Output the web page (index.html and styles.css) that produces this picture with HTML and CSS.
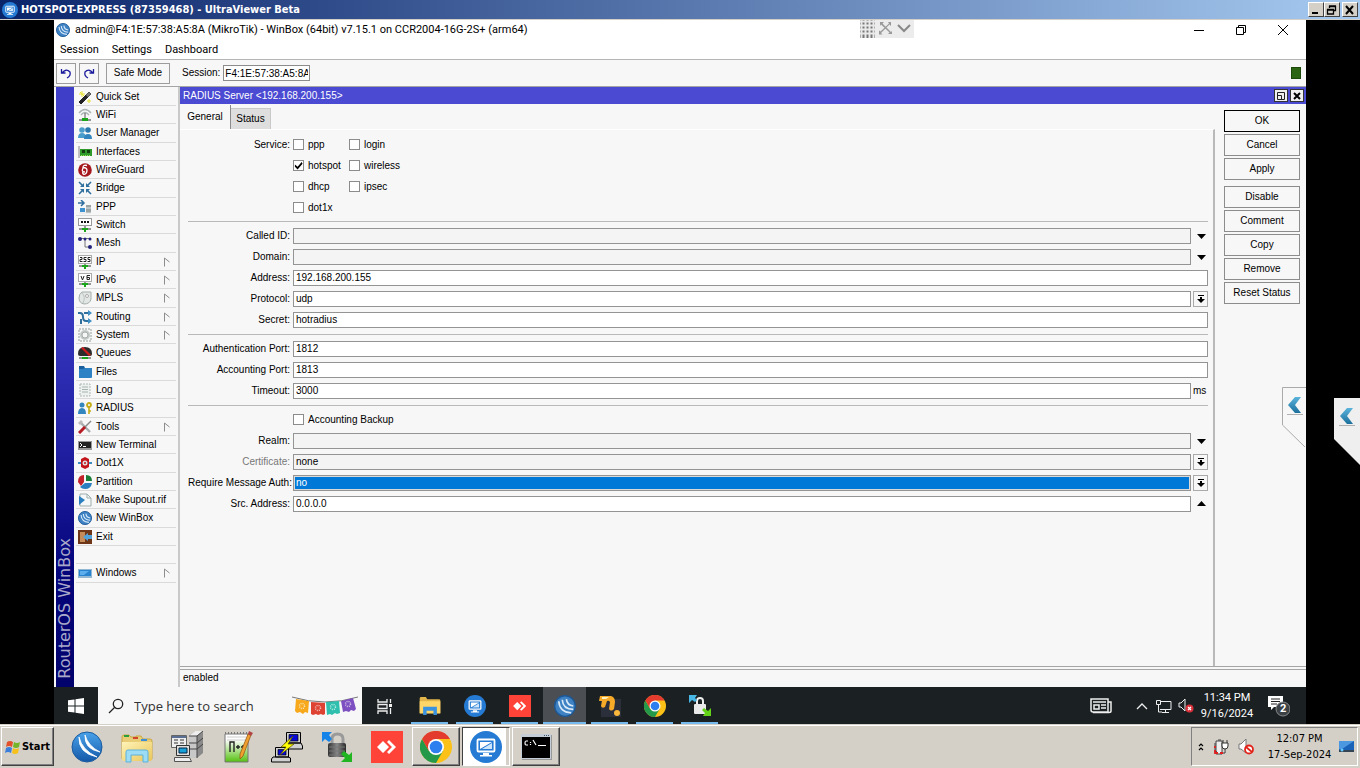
FILE: index.html
```html
<!DOCTYPE html>
<html lang="en">
<head>
<meta charset="utf-8">
<title>HOTSPOT-EXPRESS (87359468) - UltraViewer Beta</title>
<link rel="stylesheet" href="styles.css">
</head>
<body>
<svg class="defs" aria-hidden="true">
  <defs>
    <linearGradient id="blue" x1="0" y1="0" x2="0" y2="1"><stop offset="0" stop-color="#4aa3ea"/><stop offset="1" stop-color="#1458a8"/></linearGradient>
    <linearGradient id="folder" x1="0" y1="0" x2="1" y2="1"><stop offset="0" stop-color="#fff3b8"/><stop offset="1" stop-color="#e9c65a"/></linearGradient>
    <linearGradient id="chev" x1="0" y1="0" x2="0" y2="1"><stop offset="0" stop-color="#5bb4dc"/><stop offset="1" stop-color="#1b6f9c"/></linearGradient>
    <linearGradient id="green" x1="0" y1="0" x2="0" y2="1"><stop offset=".2" stop-color="#fff"/><stop offset="1" stop-color="#55c010"/></linearGradient>
    <linearGradient id="metal" x1="0" y1="0" x2="1" y2="0"><stop offset="0" stop-color="#333"/><stop offset=".5" stop-color="#888"/><stop offset="1" stop-color="#2a2a2a"/></linearGradient>
  </defs>
  <symbol id="i-winbox" viewBox="0 0 32 32"><circle cx="16" cy="16" r="15" fill="url(#blue)" stroke="#1b5b9e"/><path d="M8 6Q7 22 26 26Q11 19 8 6M14 4Q13 18 29 21Q17 15 14 4" fill="#fff" stroke="#fff" stroke-width=".8"/></symbol>
  <symbol id="i-winbox-s" viewBox="0 0 32 32"><circle cx="16" cy="16" r="15" fill="#3e82c4" stroke="#1d5896" stroke-width="2"/><path d="M7 9Q8 25 25 26M12 7Q13 21 28 21M18 6Q19 15 28 16" fill="none" stroke="#d9ebfa" stroke-width="2.400"/></symbol>
  <symbol id="i-ultra" viewBox="0 0 32 32"><circle cx="16" cy="16" r="16" fill="#257bd3"/><rect x="7.500" y="8.500" width="17" height="12" rx="1" fill="none" stroke="#fff" stroke-width="1.800"/><path d="M10 11h12l-12 7zM13 22h6v2h3v1.500H10V24h3z" fill="#fff"/><path d="M22 12v6H12z" fill="#cfe5fa"/></symbol>
  <symbol id="i-anydesk" viewBox="0 0 32 32"><path d="M0 0h32v32H0z" fill="#ff4338"/><path d="M12 10l6 6-6 6-6-6zM16 11l2-2 7 7-7 7-2-2 5-5z" fill="#fff"/></symbol>
  <symbol id="i-chrome" viewBox="0 0 32 32"><circle cx="16" cy="16" r="16" fill="#fbc116"/><path d="M2.100 8A16 16 0 0 0 16 32L22.900 20 16 16 9 20z" fill="#24994a"/><path d="M2.100 8A16 16 0 0 1 29.900 8H16L9 20z" fill="#e33b2e"/><circle cx="16" cy="16" r="8" fill="#fff"/><circle cx="16" cy="16" r="6.300" fill="#2d7ff0"/></symbol>
  <symbol id="i-folder" viewBox="0 0 32 32"><path d="M1 5q0-2 2-2h7l2 3h17q2 0 2 2v18H1z" fill="#e2b54a"/><path d="M1 9h30v18H1z" fill="#ffd667"/><path d="M6 17h20v12h-5v-6H11v6H6z" fill="#3b93e0"/></symbol>
  <symbol id="i-lock" viewBox="0 0 32 32"><path d="M11 14V8q0-5 5.500-5T22 8v6" fill="none" stroke="#9a9a9a" stroke-width="3"/><rect x="7" y="12" width="18" height="14" rx="2" fill="url(#metal)"/><path d="M8 16h16M8 20h16M8 24h16" stroke="#777"/><path d="M1 1h10L8 4l3 4-3 3-4-3-3 3z" fill="#1683e8"/><path d="M31 31H20l4-4-4-4 3-3 5 4 3-3z" fill="#20b521"/></symbol>
  <symbol id="i-lock2" viewBox="0 0 22 22"><path d="M8 9V6q0-3 3-3t3 3v3" fill="none" stroke="#eee" stroke-width="2"/><rect x="5" y="9" width="12" height="10" rx="1" fill="#e9e9e9"/><path d="M0 0h8L6 3l2 2-2 2-3-2-3 3z" fill="#49b7e6"/><path d="M22 21h-8l2-3-3-3 2-2 4 3 3-3z" fill="#63d318"/></symbol>

  <symbol id="m-quick" viewBox="0 0 14 14"><path d="M1 12L8 5l2 2-7 7z" fill="#222" stroke="#222"/><path d="M8 5l3-3 2 2-3 3z" fill="#777" stroke="#555"/><path d="M4 1v6M1 4h6M2 2l4 4M11 9v4M9 11h4" stroke="#e8e130"/></symbol>
  <symbol id="m-wifi" viewBox="0 0 14 14"><path d="M1 5q6-7 12 0M3 7q4-5 8 0" fill="none" stroke="#aab4b4" stroke-width="1.300"/><path d="M7 5v7" stroke="#555"/><path d="M1 12h12" stroke="#333"/><path d="M4 10h6v3H4z" fill="#1aa51a"/></symbol>
  <symbol id="m-users" viewBox="0 0 14 14"><circle cx="4" cy="4" r="2.800" fill="#4a9dcb"/><circle cx="10" cy="4" r="2.800" fill="#2a78ae"/><path d="M0 12q0-5 4-5t4 5z" fill="#4a9dcb"/><path d="M6 13q0-5 4-5t4 5z" fill="#3385bd"/></symbol>
  <symbol id="m-if" viewBox="0 0 14 14"><path d="M1 1v12" stroke="#888"/><path d="M2 4h12v7H2z" fill="#2f9a2a"/><path d="M4 5h3v3H4zM9 5h3v3H9z" fill="#123c12"/><path d="M3 10.500h10" stroke="#9be35f" stroke-dasharray="1 1"/></symbol>
  <symbol id="m-wg" viewBox="0 0 14 14"><circle cx="7" cy="7" r="6.800" fill="#a5171d"/><path d="M9 2.500q-4-1-4 2 4 0 4 3t-3 4q-2-1-1-3M5 5q-2 4 2 4" fill="none" stroke="#fff" stroke-width="1.300"/></symbol>
  <symbol id="m-bridge" viewBox="0 0 14 14"><path d="M1 1l4 4M13 1L9 5M1 13l4-4M13 13L9 9" stroke="#2f6f9e" stroke-width="1.600"/><path d="M6 2v4H2zM8 2v4h4zM6 12V8H2zM8 12V8h4z" fill="#2f6f9e"/></symbol>
  <symbol id="m-ppp" viewBox="0 0 14 14"><path d="M0 3h5M3 0l3 3-3 3" stroke="#2f6f9e" stroke-width="1.500" fill="none"/><path d="M2 8h5v4H2z" fill="#3d92cf"/><path d="M8 5h5v8H8z" fill="#9ba4a4"/><path d="M8 8h5M1 13h12" stroke="#e4e4e4"/></symbol>
  <symbol id="m-switch" viewBox="0 0 14 14"><rect x=".5" y=".5" width="13" height="7" fill="#fff" stroke="#999"/><path d="M3 4h8" stroke="#111" stroke-width="2" stroke-dasharray="2 1"/><path d="M7 8v4M1 11h12" stroke="#333"/><path d="M4 10h6v2H8v2H6v-2H4z" fill="#1aa51a"/></symbol>
  <symbol id="m-mesh" viewBox="0 0 14 14"><path d="M2 2.500h10M7 3v8h5" fill="none" stroke="#777"/><circle cx="2" cy="3" r="2" fill="#22227c"/><circle cx="7" cy="3" r="1.500" fill="#22227c"/><circle cx="12" cy="3" r="1.500" fill="#22227c"/><circle cx="12" cy="11" r="2" fill="#22227c"/></symbol>
  <symbol id="m-ip" viewBox="0 0 14 14"><rect x=".5" y=".5" width="13" height="8" fill="#fff" stroke="#aaa"/><path d="M2 2.500h2v2H2v2h2.500M8.500 2.500H6v2h2v2H5.500M12.500 2.500H10v2h2v2H9.500" fill="none" stroke="#222"/><path d="M1 11h12M7 9v2" stroke="#333"/><path d="M4 10h6v2H8v2H6v-2H4z" fill="#1aa51a"/></symbol>
  <symbol id="m-ip6" viewBox="0 0 14 14"><rect x=".5" y=".5" width="13" height="8" fill="#fff" stroke="#aaa"/><path d="M3 3l1.500 4L6 3M12 2.500H9v4h2.500v-2H9" fill="none" stroke="#222"/><path d="M1 11h12M7 9v2" stroke="#333"/><path d="M4 10h6v2H8v2H6v-2H4z" fill="#1aa51a"/></symbol>
  <symbol id="m-mpls" viewBox="0 0 14 14"><path d="M4 1h9v7q-1 5-7 5-5-1-5-6 0-4 3-6z" fill="#e2e6e4" stroke="#a3aeab"/><path d="M4 2q4 4 1 10" fill="none" stroke="#b9c3c0"/><circle cx="9" cy="5" r="1.500" fill="#fff" stroke="#aaa"/></symbol>
  <symbol id="m-route" viewBox="0 0 14 14"><path d="M0 3h2q3 0 3 4t3 4h3M6 3h5M3 14V9" fill="none" stroke="#2f6f9e" stroke-width="2"/><path d="M10 0l4 3-4 3zM10 8l4 3-4 3z" fill="#3f8fc5"/></symbol>
  <symbol id="m-system" viewBox="0 0 14 14"><path d="M1 1h12v12H1z" fill="none" stroke="#b5bdba" stroke-width="1.500" stroke-dasharray="2 1"/><circle cx="7" cy="7" r="5" fill="#c2cac7"/><circle cx="7" cy="7" r="3" fill="#f7f7f7" stroke="#a5aeab"/></symbol>
  <symbol id="m-queue" viewBox="0 0 14 14"><path d="M0 8q0-7 7-7t7 7q0 2-2 2H2q-2 0-2-2z" fill="#2c2c2c"/><path d="M3 2l8 8 2-1-8-8z" fill="#d01c1c"/><path d="M1 12h12" stroke="#333"/><path d="M4 11h6v2H4z" fill="#1aa51a"/></symbol>
  <symbol id="m-files" viewBox="0 0 14 14"><path d="M1 1h5l1 2h2v2H1z" fill="#185f9c"/><path d="M1 13V4h4l2-1h7v9q0 1-1 1z" fill="#2c82c4"/></symbol>
  <symbol id="m-log" viewBox="0 0 14 14"><path d="M2 1h10v12H2z" fill="#edf1f0" stroke="#adb8b5" stroke-dasharray="2 1"/><path d="M4 4h6M4 6.500h6M4 9h6" stroke="#a7b3b0"/></symbol>
  <symbol id="m-radius" viewBox="0 0 14 14"><circle cx="4" cy="4" r="2.500" fill="#3385bd"/><path d="M0 13q0-6 4-6t4 6z" fill="#3385bd"/><circle cx="11" cy="4" r="2" fill="none" stroke="#c4ac16" stroke-width="1.800"/><path d="M11 6v7M11 10h2" stroke="#c4ac16" stroke-width="1.600"/></symbol>
  <symbol id="m-tools" viewBox="0 0 14 14"><path d="M2 2l10 10" stroke="#a8adb0" stroke-width="2.400"/><path d="M0 3l3-3 2 2-3 3z" fill="#bbb"/><path d="M13 1L6 8" stroke="#888" stroke-width="1.500"/><path d="M7 7l-6 6" stroke="#b61a23" stroke-width="3"/></symbol>
  <symbol id="m-term" viewBox="0 0 14 14"><path d="M0 3h14v9H0z" fill="#999"/><path d="M1 4h12v6H1z" fill="#222"/><path d="M2 5l2 2-2 2M5 8.500h3" fill="none" stroke="#fff"/></symbol>
  <symbol id="m-dot" viewBox="0 0 14 14"><path d="M0 7h14" stroke="#3d8cc0" stroke-width="2"/><path d="M7 1l4 2v8l-4 2-4-2V3z" fill="#c3141b"/><circle cx="7" cy="7" r="2.500" fill="#ddd"/><circle cx="7" cy="7" r="1" fill="#c3141b"/></symbol>
  <symbol id="m-part" viewBox="0 0 14 14"><path d="M6 7V0Q0 0 0 7l3 4z" fill="#c3222b"/><path d="M8 0q6 0 6 6H8z" fill="#187e38"/><path d="M7 8h7q-1 6-7 6-3 0-5-2z" fill="#2a7fc0"/></symbol>
  <symbol id="m-supout" viewBox="0 0 14 14"><path d="M2 1h7l4 4v8H2z" fill="#f5f8f8" stroke="#9daead"/><path d="M9 1v4h4" fill="none" stroke="#9daead"/><path d="M1 3l6 4-6 5z" fill="#2a7fc0"/></symbol>
  <symbol id="m-exit" viewBox="0 0 14 14"><path d="M0 0h14v14H0z" fill="#6e3517"/><path d="M2 2h5v10H2z" fill="#c58b58"/><path d="M5 7l5-4v2h4v4h-4v2z" fill="#52a3da"/></symbol>
  <symbol id="m-win" viewBox="0 0 14 14"><path d="M0 3h14v9H0z" fill="#91b7d3"/><path d="M1 4h12v6H1z" fill="#2783cf"/><path d="M2 5h9l-5 4H2z" fill="#5badeb"/></symbol>
  <symbol id="flag" viewBox="0 0 8 10"><path d="M6.500 5L1.500 1v8.500" fill="none" stroke="#8d8d8d"/></symbol>
  <symbol id="down" viewBox="0 0 10 10"><path d="M1 3h9L5.500 8z"/></symbol>
  <symbol id="up" viewBox="0 0 10 10"><path d="M1 7h9L5.500 2z"/></symbol>
  <symbol id="pick" viewBox="0 0 10 10"><path d="M2 1h6v1H2zM4 3h2v2h3L5 9 1 5h3z"/></symbol>
  <symbol id="side" viewBox="0 0 18 20"><path d="M9 1h6l-6 8 6 8H9L2 9z" fill="url(#chev)"/><path d="M1 18.500h16" stroke="#b0b0b0"/></symbol>
</svg>

<header class="host-title">
  <svg class="i16"><use href="#i-ultra"/></svg>
  <h1>HOTSPOT-EXPRESS (87359468) - UltraViewer Beta</h1>
  <div class="host-ctl">
    <button aria-label="Minimize"><svg viewBox="0 0 12 10"><path d="M2 7h6v2H2z"/></svg></button>
    <button aria-label="Restore"><svg viewBox="0 0 12 10"><path d="M3.500 3V1.500h6v4H8M1.500 5h6v4h-6zM3 1h7M1 4.500h7" fill="none" stroke="#000" stroke-width="1.300"/></svg></button>
    <button class="gap" aria-label="Close"><svg viewBox="0 0 12 10"><path d="M2 1l7 8M9 1L2 9" stroke="#000" stroke-width="2"/></svg></button>
  </div>
</header>

<main class="stage">
  <div class="remote">
    <div class="wb-title">
      <svg class="i14"><use href="#i-winbox-s"/></svg>
      <span>admin@F4:1E:57:38:A5:8A (MikroTik) - WinBox (64bit) v7.15.1 on CCR2004-16G-2S+ (arm64)</span>
      <div class="wb-ctl">
        <button aria-label="Minimize window"><svg viewBox="0 0 12 12"><path d="M1 6.500h10" stroke="#000"/></svg></button>
        <button aria-label="Restore window"><svg viewBox="0 0 12 12"><path d="M1.500 3.500h7v7h-7zM3.500 3V1.500h7v7H9" fill="none" stroke="#000"/></svg></button>
        <button aria-label="Close window"><svg viewBox="0 0 12 12"><path d="M1 1l10 10M11 1L1 11" stroke="#000"/></svg></button>
      </div>
    </div>
    <nav class="wb-menu"><a href="#">Session</a><a href="#">Settings</a><a href="#">Dashboard</a></nav>
    <div class="tools">
      <button class="sq" aria-label="Undo"><svg viewBox="0 0 12 12"><path d="M1.500 2v4h4M2 6q4-5 8-1 1 4-3 6" fill="none" stroke="#1a1a9c" stroke-width="1.300"/></svg></button>
      <button class="sq" aria-label="Redo"><svg viewBox="0 0 12 12"><path d="M10.500 2v4h-4M10 6Q6 1 2 5q-1 4 3 6" fill="none" stroke="#1a1a9c" stroke-width="1.300"/></svg></button>
      <button class="safe">Safe Mode</button>
      <label for="session">Session:</label>
      <input id="session" value="F4:1E:57:38:A5:8A" readonly>
      <span class="led"></span>
    </div>
    <div class="wb-body">
      <div class="brand"><span>RouterOS WinBox</span></div>
      <nav class="side">
        <a href="#"><svg><use href="#m-quick"/></svg><span>Quick Set</span></a>
        <a href="#"><svg><use href="#m-wifi"/></svg><span>WiFi</span></a>
        <a href="#"><svg><use href="#m-users"/></svg><span>User Manager</span></a>
        <a href="#"><svg><use href="#m-if"/></svg><span>Interfaces</span></a>
        <a href="#"><svg><use href="#m-wg"/></svg><span>WireGuard</span></a>
        <a href="#"><svg><use href="#m-bridge"/></svg><span>Bridge</span></a>
        <a href="#"><svg><use href="#m-ppp"/></svg><span>PPP</span></a>
        <a href="#"><svg><use href="#m-switch"/></svg><span>Switch</span></a>
        <a href="#"><svg><use href="#m-mesh"/></svg><span>Mesh</span></a>
        <a href="#"><svg><use href="#m-ip"/></svg><span>IP</span><svg class="flag"><use href="#flag"/></svg></a>
        <a href="#"><svg><use href="#m-ip6"/></svg><span>IPv6</span><svg class="flag"><use href="#flag"/></svg></a>
        <a href="#"><svg><use href="#m-mpls"/></svg><span>MPLS</span><svg class="flag"><use href="#flag"/></svg></a>
        <a href="#"><svg><use href="#m-route"/></svg><span>Routing</span><svg class="flag"><use href="#flag"/></svg></a>
        <a href="#"><svg><use href="#m-system"/></svg><span>System</span><svg class="flag"><use href="#flag"/></svg></a>
        <a href="#"><svg><use href="#m-queue"/></svg><span>Queues</span></a>
        <a href="#"><svg><use href="#m-files"/></svg><span>Files</span></a>
        <a href="#"><svg><use href="#m-log"/></svg><span>Log</span></a>
        <a href="#"><svg><use href="#m-radius"/></svg><span>RADIUS</span></a>
        <a href="#"><svg><use href="#m-tools"/></svg><span>Tools</span><svg class="flag"><use href="#flag"/></svg></a>
        <a href="#"><svg><use href="#m-term"/></svg><span>New Terminal</span></a>
        <a href="#"><svg><use href="#m-dot"/></svg><span>Dot1X</span></a>
        <a href="#"><svg><use href="#m-part"/></svg><span>Partition</span></a>
        <a href="#"><svg><use href="#m-supout"/></svg><span>Make Supout.rif</span></a>
        <a href="#"><svg><use href="#i-winbox-s"/></svg><span>New WinBox</span></a>
        <a href="#"><svg><use href="#m-exit"/></svg><span>Exit</span></a>
        <div class="blank"></div>
        <a href="#"><svg><use href="#m-win"/></svg><span>Windows</span><svg class="flag"><use href="#flag"/></svg></a>
      </nav>
      <section class="dialog">
        <div class="dlg-title">
          <h2>RADIUS Server &lt;192.168.200.155&gt;</h2>
          <button aria-label="Restore dialog"><svg viewBox="0 0 10 10"><path d="M1.500 1.500h7v7h-7zM2 4.500h3.500V8" fill="none" stroke="#222"/></svg></button>
          <button aria-label="Close dialog"><svg viewBox="0 0 10 10"><path d="M2 2l6 6M8 2L2 8" stroke="#000" stroke-width="2"/></svg></button>
        </div>
        <div class="dlg-main">
          <div class="panel">
            <div class="tabs"><button class="tab on">General</button><button class="tab">Status</button></div>
            <form class="form">
              <div class="group">
                <div class="row"><span class="lab">Service:</span>
                  <label class="ck"><input type="checkbox">ppp</label><label class="ck"><input type="checkbox">login</label></div>
                <div class="row"><span class="lab"></span>
                  <label class="ck"><input type="checkbox" checked>hotspot</label><label class="ck"><input type="checkbox">wireless</label></div>
                <div class="row"><span class="lab"></span>
                  <label class="ck"><input type="checkbox">dhcp</label><label class="ck"><input type="checkbox">ipsec</label></div>
                <div class="row"><span class="lab"></span>
                  <label class="ck"><input type="checkbox">dot1x</label></div>
              </div>
              <div class="group">
                <div class="row"><label class="lab" for="called">Called ID:</label><input class="fld dim" id="called"><button type="button" class="bare" aria-label="Expand Called ID"><svg><use href="#down"/></svg></button></div>
                <div class="row"><label class="lab" for="domain">Domain:</label><input class="fld dim" id="domain"><button type="button" class="bare" aria-label="Expand Domain"><svg><use href="#down"/></svg></button></div>
                <div class="row"><label class="lab" for="addr">Address:</label><input class="fld" id="addr" value="192.168.200.155"></div>
                <div class="row"><label class="lab" for="proto">Protocol:</label><select class="fld" id="proto"><option>udp</option></select><button type="button" class="pick" aria-label="Choose protocol"><svg><use href="#pick"/></svg></button></div>
                <div class="row"><label class="lab" for="secret">Secret:</label><input class="fld" id="secret" value="hotradius"></div>
              </div>
              <div class="group">
                <div class="row"><label class="lab" for="auth">Authentication Port:</label><input class="fld" id="auth" value="1812"></div>
                <div class="row"><label class="lab" for="acct">Accounting Port:</label><input class="fld" id="acct" value="1813"></div>
                <div class="row"><label class="lab" for="timeout">Timeout:</label><input class="fld" id="timeout" value="3000"><span class="unit">ms</span></div>
              </div>
              <div class="group">
                <div class="row"><span class="lab"></span><label class="ck"><input type="checkbox">Accounting Backup</label></div>
                <div class="row"><label class="lab" for="realm">Realm:</label><input class="fld dim" id="realm"><button type="button" class="bare" aria-label="Expand Realm"><svg><use href="#down"/></svg></button></div>
                <div class="row"><label class="lab off" for="cert">Certificate:</label><select class="fld dim" id="cert"><option>none</option></select><button type="button" class="pick" aria-label="Choose certificate"><svg><use href="#pick"/></svg></button></div>
                <div class="row"><label class="lab" for="msg">Require Message Auth:</label><select class="fld sel" id="msg"><option>no</option></select><button type="button" class="pick" aria-label="Choose message auth"><svg><use href="#pick"/></svg></button></div>
                <div class="row"><label class="lab" for="src">Src. Address:</label><input class="fld" id="src" value="0.0.0.0"><button type="button" class="bare" aria-label="Collapse Src. Address"><svg><use href="#up"/></svg></button></div>
              </div>
            </form>
          </div>
          <div class="actions">
            <button class="ok">OK</button><button>Cancel</button><button>Apply</button>
            <button class="next">Disable</button><button>Comment</button><button>Copy</button><button>Remove</button><button>Reset Status</button>
          </div>
        </div>
        <div class="status">enabled</div>
      </section>
    </div>
    <footer class="rbar">
      <button class="rstart" aria-label="Start menu"><svg viewBox="0 0 16 16"><path d="M0 2.300l6.500-.9v6.100H0zM7.500 1.200L16 0v7.500H7.500zM0 8.500h6.500v6.100L0 13.700zM7.500 8.500H16V16l-8.500-1.200z" fill="#fff"/></svg></button>
      <div class="search">
        <svg class="glass" viewBox="0 0 16 16"><circle cx="10" cy="6" r="4.700" fill="none" stroke="#222" stroke-width="1.300"/><path d="M6.500 9.500L1 15" stroke="#222" stroke-width="1.300"/></svg>
        <input aria-label="Search" placeholder="Type here to search">
        <svg class="bunting" viewBox="0 0 66 20"><path d="M0 1q33 10 66 0" fill="none" stroke="#777"/><path d="M4 3l13 2-1 12-3-1-2 2-3-2-3 1-2-2z" fill="#f7a81b"/><path d="M19 6l14 1v11l-2 1-2-1-3 1-2-1-3 1-2-1z" fill="#dd4232"/><path d="M34 6l13-1 1 12-3 1-2-1-3 2-2-1-3 1z" fill="#2fbfae"/><path d="M49 5l12-3 3 11-2 2-3-1-2 2-3-1-3 1z" fill="#7d4fc0"/><g fill="none" stroke="#fff" stroke-opacity=".65" stroke-dasharray="1 1" stroke-width="1.500"><circle cx="10" cy="10" r="2.500"/><circle cx="26" cy="12" r="2.500"/><circle cx="41" cy="11" r="2.500"/><circle cx="56" cy="8" r="2.500"/></g></svg>
      </div>
      <div class="apps">
        <button class="app none" aria-label="Task view"><svg viewBox="0 0 22 22"><path d="M4 4v3h9V4M4 9.500h9v4H4zM4 19v-3h9v3M16.500 4v4M16.500 13v6" fill="none" stroke="#eee" stroke-width="1.300"/><path d="M15 9h3v3h-3z" fill="#eee"/></svg></button>
        <button class="app" aria-label="File Explorer"><svg><use href="#i-folder"/></svg></button>
        <button class="app" aria-label="UltraViewer"><svg><use href="#i-ultra"/></svg></button>
        <button class="app" aria-label="AnyDesk"><svg><use href="#i-anydesk"/></svg></button>
        <button class="app on" aria-label="WinBox"><svg><use href="#i-winbox-s"/></svg></button>
        <button class="app" aria-label="Sound tool"><svg viewBox="0 0 22 22"><path d="M2 4h20v18H2z" fill="#2b2f3b"/><path d="M1 1h11q4 1 4 6l-1 7q-3 3-5 0l1-7q-1-2-3-1l-2 6q-3 2-4-1l1-5H0z" fill="#f7a928"/><path d="M3 2h7L7 4H3z" fill="#fff0c0"/><circle cx="18" cy="18" r="3" fill="#f9b73c"/></svg></button>
        <button class="app" aria-label="Chrome"><svg><use href="#i-chrome"/></svg></button>
        <button class="app" aria-label="WinSCP"><svg><use href="#i-lock2"/></svg></button>
      </div>
      <div class="rtray">
        <svg class="news" viewBox="0 0 22 16"><path d="M1 1h17v13H3q-2 0-2-2zM18 4h3v9q0 1.500-2 1.500H3" fill="none" stroke="#eee" stroke-width="1.500"/><path d="M3 4h13M11 7h5M11 10h5" stroke="#eee" stroke-width="1.400"/><path d="M4 7h5v4H4z" fill="none" stroke="#eee" stroke-width="1.500"/></svg>
        <svg class="i12 chev" viewBox="0 0 12 12"><path d="M1 9l5-5 5 5" fill="none" stroke="#eee" stroke-width="1.300"/></svg>
        <svg class="i16" viewBox="0 0 16 16"><path d="M4 3.500h11v8H4M9.500 12v3M6 14.500h7M.5 2.500h4v4h-4zM2.500 7v7H6" fill="none" stroke="#eee"/></svg>
        <svg class="i16" viewBox="0 0 16 16"><path d="M1 5h2l4-4v12L3 9H1z" fill="none" stroke="#eee"/><circle cx="11.500" cy="10.500" r="4" fill="#d8303a"/><path d="M10 9l3 3M13 9l-3 3" stroke="#fff" stroke-width="1.200"/></svg>
        <div class="rclock"><span>11:34 PM</span><span>9/16/2024</span></div>
        <div class="notif"><svg viewBox="0 0 22 22"><path d="M0 1h15v11H6l-3 3v-3H0z" fill="#fff"/><path d="M3 4h9M3 6.500h9M3 9h6" stroke="#222"/><circle cx="15" cy="14" r="7" fill="#3b4145" stroke="#888"/></svg><b>2</b></div>
      </div>
    </footer>
    <div class="viewer-tools">
      <svg viewBox="0 0 54 18"><path d="M0 0h15v18H0z" fill="#777"/><path d="M1.500 0v18M5.500 0v18M9.500 0v18M13.500 0v18M0 1.500h15M0 5.500h15M0 9.500h15M0 13.500h15" stroke="#e9e9e9" stroke-width="2"/><path d="M20 2h4l-1.500 1.500L31 12l1-1v3h-4l1.500-1.500L21 4.500 20 6zM31 2v4l-1.500-1.500L21 13l1.500 1.500H19v-4l1.500 1L29 3.500 28 2z" fill="#999"/><path d="M38 5l6 6 6-6" fill="none" stroke="#888" stroke-width="2"/></svg>
    </div>
    <button class="pull inner" aria-label="Open remote panel"><svg class="cut" viewBox="0 0 24 60"><path d="M24 .5H.500V38L24 61" fill="#f7f7f7" stroke="#aaa"/></svg><svg class="arrow"><use href="#side"/></svg></button>
  </div>
  <button class="pull outer" aria-label="Open panel"><svg class="cut" viewBox="0 0 26 67"><path d="M26 0H0v41l26 26z" fill="#efefef"/></svg><svg class="arrow"><use href="#side"/></svg></button>
</main>

<footer class="hbar">
  <button class="hstart"><svg viewBox="0 0 16 16"><path d="M2 3q3-2 6 0L7 8Q4 6 1 8z" fill="#e2512b"/><path d="M9 3q3 2 6 0l-1 5q-3 2-6 0z" fill="#74b52a"/><path d="M1 9q3-2 6 0l-1 5q-3-2-6 0z" fill="#3b7edb"/><path d="M8 9q3 2 6 0l-1 5q-3 2-6 0z" fill="#f6c11c"/></svg>Start</button>
  <div class="quick">
    <button aria-label="WinBox"><svg><use href="#i-winbox"/></svg></button>
    <button aria-label="Explorer"><svg viewBox="0 0 32 32"><path d="M1 6q0-2 2-2h5l2 2h5V5h5l2 3h7q2 0 2 2v18H1z" fill="#e8cd76" stroke="#c9a840"/><path d="M3 5h5" stroke="#2c9e3b" stroke-width="2"/><path d="M12 7h5" stroke="#d2452d" stroke-width="2"/><path d="M20 9h6" stroke="#3a8fd8" stroke-width="2"/><path d="M1 11h30v17q0 2-2 2H3q-2 0-2-2z" fill="url(#folder)"/><path d="M5 31V21q0-2 2-2h18q2 0 2 2v10h-5v-7H10v7z" fill="#9cdcf5" stroke="#5fb1d8"/></svg></button>
    <button aria-label="Servers"><svg viewBox="0 0 32 32"><path d="M18 5l6-5h8v22l-6 5h-8z" fill="#8a8a8a"/><path d="M18 5h8v22h-8z" fill="#c8c8c8"/><path d="M18 5l6-5h8l-6 5z" fill="#eee"/><path d="M18 12h8l6-5M18 18h8l6-5M18 5h8v22M26 5l6-5" fill="none" stroke="#444"/><path d="M.5 4.500h15v12H.500z" fill="#eee" stroke="#666"/><path d="M1 5h14v2H1z" fill="#5b6f95"/><path d="M3 9h4M3 12h4M9 9h4M9 12h4" stroke="#333"/><path d="M5.500 14.500h13v10h-13z" fill="#ddd" stroke="#333"/><path d="M8 17h8v5H8z" fill="#18a0d8" stroke="#024"/><path d="M3.500 26.500h15l2 4h-17z" fill="#eee" stroke="#555"/></svg></button>
    <button aria-label="Notepad++"><svg viewBox="0 0 32 32"><path d="M4 3h23v28H4z" fill="url(#green)" stroke="#777"/><path d="M4 2h23" stroke="#777" stroke-width="2" stroke-dasharray="1 2"/><path d="M6 6h19M6 9h19" stroke="#ccc"/><path d="M9 21V11h4v10M15 16h4M17 14v4M20 16h4M22 14v4" fill="none" stroke="#222" stroke-width="1.400"/><path d="M27 3l3 1-8 21-3 3v-5z" fill="#f0a030" stroke="#8f5210" stroke-width=".7"/><path d="M28 0l4 2-2 3-3-2z" fill="#b04343"/></svg></button>
    <button aria-label="PuTTY"><svg viewBox="0 0 32 32"><path d="M15.500 1.500h14V12h-14zM14 12h16l1.500 3v3H15zM4.500 16.500h13V26h-13zM2 26h15l2.500 1v4H.500v-3z" fill="#d0d0d0" stroke="#000"/><path d="M18 3.500h9V10h-9zM7 18.500h8V24H7z" fill="#0707d8" stroke="#000" stroke-width=".7"/><path d="M22 5L10 16h5l-6 8 14-11h-6z" fill="#ff0" stroke="#554b00" stroke-width=".7"/></svg></button>
    <button aria-label="WinSCP"><svg><use href="#i-lock"/></svg></button>
    <button aria-label="AnyDesk"><svg><use href="#i-anydesk"/></svg></button>
  </div>
  <div class="tasks">
    <button aria-label="Chrome"><svg><use href="#i-chrome"/></svg></button>
    <button class="down" aria-label="UltraViewer"><svg><use href="#i-ultra"/></svg></button>
    <button aria-label="Command prompt"><svg viewBox="0 0 32 32"><path d="M2 4h30v25H2z" fill="#999"/><path d="M1 3h30v25H1z" fill="#c4cdd5"/><path d="M2 6h28v21H2z" fill="#000"/><path d="M24 4.500h5" stroke="#456" stroke-dasharray="1 1"/><path d="M8 10H6q-1 0-1 2t1 2h2M10.500 11v1M10.500 13v1M13 9l3 5M18 14.500h8" fill="none" stroke="#fff" stroke-width="1.200"/></svg></button>
  </div>
  <div class="htray">
    <svg class="more" viewBox="0 0 6 10"><path d="M1 4l2-2 2 2M1 8l2-2 2 2" fill="none" stroke="#000" stroke-width="1.200"/></svg>
    <svg class="i16" viewBox="0 0 16 16"><path d="M2 2h6v13H2zM1 4v9M4 1h3" fill="#eee" stroke="#444"/><path d="M1 7v2M1 11v3h3M6 14h3" stroke="#e02020" stroke-width="1.800"/><path d="M8 4h6v3q0 3-3 3t-3-3zM9 1v3M13 1v3M11 10v4H9" fill="#fff" stroke="#333"/></svg>
    <svg class="i16 spk" viewBox="0 0 16 16"><path d="M1 5h2l5-5v14L3 10H1z" fill="#fff" stroke="#777"/><circle cx="11" cy="10.500" r="4" fill="#fff" stroke="#e2231a" stroke-width="1.800"/><path d="M8 8l6 5" stroke="#e2231a" stroke-width="1.800"/></svg>
    <div class="hclock"><span>12:07 PM</span><span>17-Sep-2024</span></div>
    <svg class="desk" viewBox="0 0 16 14"><path d="M0 1h15v11H0z" fill="#1a62b8"/><path d="M0 1h15L3 9H0z" fill="#4b97e0"/><path d="M0 10h15v2H0z" fill="#345"/><circle cx="3" cy="10" r="1.500" fill="#6cf"/></svg>
  </div>
</footer>
</body>
</html>
```
FILE: styles.css
```css
* { box-sizing: border-box; }
html, body { height: 100%; }
body {
  margin: 0;
  display: flex;
  flex-direction: column;
  background: #000;
  color: #000;
  font: 10px/14px "Liberation Sans", Arial, sans-serif;
  overflow: hidden;
}
button, input, select { font: inherit; color: inherit; margin: 0; padding: 0; border-radius: 0; outline: 0; }
button { background: none; border: 0; display: flex; align-items: center; justify-content: center; white-space: nowrap; }
a { color: inherit; text-decoration: none; }
h1, h2 { margin: 0; font: inherit; }
svg { display: block; flex: none; }
.defs { position: absolute; width: 0; height: 0; }
.i12 { width: 12px; height: 12px; }
.i14 { width: 14px; height: 14px; }
.i16 { width: 16px; height: 16px; }

/* host window title */
.host-title {
  display: flex;
  align-items: center;
  gap: 3px;
  height: 20px;
  padding: 0 2px;
  border-bottom: 1px solid #d4d0c8;
  background: linear-gradient(90deg, #0a246a, #a6caf0);
  color: #fff;
}
.host-title h1 { flex: 1; font: bold 11px/16px "DejaVu Sans Condensed", "DejaVu Sans", sans-serif; }
.host-ctl { display: flex; }
.host-ctl button {
  width: 16px;
  height: 15px;
  background: #d4d0c8;
  border: 1px solid;
  border-color: #fff #404040 #404040 #fff;
}
.host-ctl .gap { margin-left: 2px; }
.host-ctl svg { width: 12px; height: 10px; }

/* remote desktop */
.stage { position: relative; flex: 1; display: flex; padding: 0 54px; min-height: 0; }
.remote { position: relative; flex: 1; display: flex; flex-direction: column; min-width: 0; background: #f7f7f7; }
.wb-title {
  display: flex;
  align-items: center;
  gap: 5px;
  height: 20px;
  padding: 0 2px;
  background: #fff;
  font: 11px/16px Roboto, sans-serif;
}
.wb-title span { flex: 1; }
.wb-ctl { display: flex; }
.wb-ctl button { width: 42px; height: 20px; }
.wb-ctl svg { width: 12px; height: 12px; }
.wb-menu {
  display: flex;
  gap: 13px;
  height: 20px;
  padding: 1px 6px 0;
  background: #fff;
  border-bottom: 1px solid #b5b5b5;
  font: 11px/18px Roboto, sans-serif;
}
.tools { display: flex; align-items: center; height: 27px; padding: 0 5px 0 2px; border-bottom: 1px solid #a5a5a5; }
.tools button { height: 21px; border: 1px solid #9c9c9c; }
.tools .sq { width: 20px; margin-right: 3px; }
.tools .sq svg { width: 12px; height: 12px; }
.tools .safe { width: 64px; margin: 0 12px 0 4px; }
.tools input { width: 87px; height: 16px; margin-left: 3px; padding: 0 1px; border: 1px solid #8c8c8c; background: #fff; }
.led { width: 10px; height: 12px; margin-left: auto; background: #2b6412; border: 1px solid #1d4a0a; }

.wb-body { flex: 1; display: flex; min-height: 0; padding-left: 2px; }
.brand {
  width: 18px;
  display: flex;
  align-items: flex-end;
  justify-content: center;
  padding-bottom: 8px;
  background: linear-gradient(#3e3ec8 0, #3a3ac4 35%, #1a1a9a 65%, #05057c 80%, #02026c);
}
.brand span { writing-mode: vertical-rl; rotate: 180deg; font: 16px/18px "DejaVu Sans", sans-serif; color: #a9a9c9; }
.side { width: 106px; padding: 1px 2px 0; border-right: 2px solid #c9c9c9; }
.side a { display: flex; align-items: center; height: 18px; padding-left: 2px; border-bottom: 1px solid #dadada; white-space: nowrap; }
.side a:nth-child(3n) { height: 19px; }
.side a svg { width: 14px; height: 14px; margin-right: 4px; }
.side a .flag { width: 8px; height: 10px; margin: 0 5px 0 auto; }
.blank { height: 18px; border-bottom: 1px solid #dadada; }

/* dialog */
.dialog { flex: 1; display: flex; flex-direction: column; min-width: 0; }
.dlg-title { display: flex; align-items: center; gap: 2px; height: 17px; padding: 0 2px 0 3px; background: #4a4ad2; color: #fff; }
.dlg-title h2 { flex: 1; }
.dlg-title button { width: 14px; height: 13px; background: #f0f0f0; border: 1px solid #333; }
.dlg-title svg { width: 10px; height: 10px; }
.dlg-main { flex: 1; display: flex; min-height: 0; border-bottom: 1px solid #a5a5a5; }
.panel { flex: 1; display: flex; flex-direction: column; min-width: 0; }
.tabs { display: flex; align-items: flex-end; height: 25px; }
.tab { height: 21px; width: 40px; background: #dedede; border: 1px solid #c9c9c9; border-width: 1px 1px 0 0; }
.tab.on { height: 24px; width: 51px; background: none; border-color: #8c8c8c; border-width: 0 1px 0 0; }
.form { flex: 1; border-top: 1px solid #fff; border-right: 2px solid #b9b9b9; padding: 1px 5px 0 8px; }
.group { padding: 3px 0; border-bottom: 1px solid #b9b9b9; }
.group + .group { padding-bottom: 4px; }
.group:last-child { border: 0; }
.row { display: flex; align-items: center; height: 21px; }
.lab { width: 102px; margin-right: 3px; text-align: right; white-space: nowrap; }
.off { color: #777; }
.ck { display: flex; align-items: center; gap: 4px; min-width: 56px; white-space: nowrap; }
.ck input { appearance: none; width: 11px; height: 11px; background: #fff; border: 1px solid #8c8c8c; }
.ck input:checked::before { content: ""; display: block; height: 9px; background: #000; clip-path: polygon(10% 40%, 40% 65%, 85% 10%, 95% 30%, 40% 95%, 10% 65%); }
.fld { flex: 1; min-width: 0; height: 16px; padding: 0 2px; background: #fff; border: 1px solid #949494; }
select.fld { appearance: none; }
.fld.dim { background: #f4f4f4; }
.fld.sel { background: #0078d7; color: #fff; box-shadow: inset 0 0 0 1px #d9d9d9; }
.bare, .pick { width: 15px; height: 16px; margin-left: 2px; }
.pick { border: 1px solid #aaa; }
.row svg { width: 10px; height: 10px; }
.unit { width: 15px; margin-left: 2px; }
.actions { width: 91px; padding: 6px 6px 0 9px; display: flex; flex-direction: column; gap: 2px; }
.actions button { height: 22px; border: 1px solid #8c8c8c; }
.actions .ok { border-color: #000; }
.actions .next { margin-top: 4px; }
.status { height: 18px; margin-top: 2px; padding: 1px 3px; border-top: 1px solid #a5a5a5; }

/* remote taskbar */
.rbar { display: flex; height: 37px; background: #1b2023; color: #fff; }
.rstart { width: 44px; }
.rstart svg { width: 16px; height: 16px; }
.search { width: 264px; display: flex; align-items: center; padding: 0 4px 0 10px; background: #f7f7f7; }
.search input { flex: 1; min-width: 0; border: 0; background: none; margin-left: 10px; font: 13px/20px "Open Sans", sans-serif; }
.search input::placeholder { color: #333; }
.glass { width: 16px; height: 16px; }
.bunting { width: 66px; height: 20px; }
.apps { display: flex; }
.app { position: relative; width: 45px; }
.app svg { width: 22px; height: 22px; }
.app::after { content: ""; position: absolute; left: 4px; right: 4px; bottom: 0; height: 2px; background: #76b9ed; }
.app.none::after { display: none; }
.app.on { background: linear-gradient(#4b4f53, #4b4f53) center / 43px 100% no-repeat; }
.app.on::after { left: 1px; right: 1px; }
.rtray { margin-left: auto; display: flex; align-items: center; gap: 6px; padding-right: 14px; }
.news { width: 22px; height: 16px; margin-right: 18px; }
.rtray .chev { margin-right: 2px; }
.rclock { display: flex; flex-direction: column; width: 54px; text-align: center; font: 11px/16px Roboto, sans-serif; white-space: nowrap; }
.notif { position: relative; width: 24px; margin-left: 8px; }
.notif svg { width: 22px; height: 22px; }
.notif b { position: absolute; left: 12px; top: 7px; font: bold 11px/14px Roboto, sans-serif; }

/* overlays */
.viewer-tools { position: absolute; left: 50%; top: 0; margin-left: 180px; width: 54px; height: 18px; background: #ececec; }
.pull { position: absolute; display: block; }
.pull.inner { right: 0; top: 367px; width: 24px; height: 60px; }
.pull.outer { right: 0; top: 378px; width: 26px; height: 67px; }
.pull .cut { width: 100%; height: 100%; }
.pull .arrow { position: absolute; left: 4px; top: 9px; width: 18px; height: 20px; }

/* host taskbar */
.hbar {
  display: flex;
  align-items: stretch;
  height: 44px;
  padding: 2px 2px 2px 1px;
  background: #d4d0c8;
  border-top: 1px solid #d4d0c8;
  box-shadow: inset 0 1px #fff;
}
.hstart, .tasks button { border: 1px solid; border-color: #fff #404040 #404040 #fff; box-shadow: inset -1px -1px #808080; }
.hstart { width: 53px; gap: 1px; font: bold 11px/14px "DejaVu Sans Condensed", "DejaVu Sans", sans-serif; }
.hstart svg { width: 16px; height: 16px; }
.quick { display: flex; margin-left: 8px; }
.quick button { width: 50px; }
.quick svg, .tasks svg { width: 32px; height: 32px; }
.tasks { display: flex; gap: 2px; }
.tasks button { width: 48px; }
.tasks .down { background: #fff; border-color: #404040 #fff #fff #404040; box-shadow: inset -3px 0 #d4d0c8; }
.htray { margin-left: auto; width: 167px; display: flex; align-items: center; padding: 0 2px 0 6px; border: 1px solid; border-color: #808080 #fff #fff #808080; font: 11px/16px "DejaVu Sans Condensed", "DejaVu Sans", sans-serif; }
.more { width: 6px; height: 10px; margin-right: 10px; }
.spk { margin-left: 8px; }
.hclock { flex: 1; display: flex; flex-direction: column; align-items: center; padding-left: 6px; white-space: nowrap; }
.desk { width: 16px; height: 14px; }
```
